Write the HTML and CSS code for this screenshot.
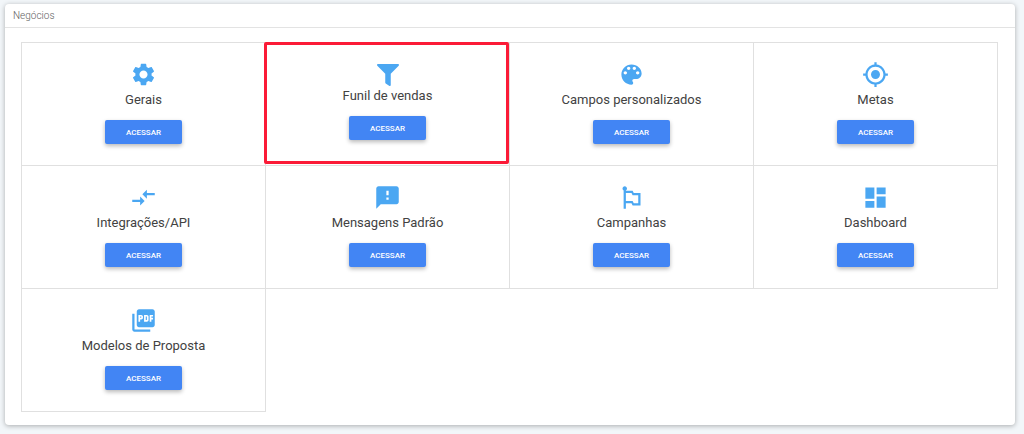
FILE: index.html
```html
<!DOCTYPE html>
<html lang="pt-BR">
<head>
<meta charset="utf-8">
<meta name="viewport" content="width=device-width, initial-scale=1">
<title>Negócios</title>
<link rel="stylesheet" href="styles.css">
</head>
<body>
<main class="card">
  <h1 class="card-header">Negócios</h1>
  <div class="tiles">
    <section class="tile">
      <svg class="icon" viewBox="0 0 24 24" aria-hidden="true"><path d="M19.14 12.94c.04-.3.06-.61.06-.94 0-.32-.02-.64-.07-.94l2.03-1.58c.18-.14.23-.41.12-.61l-1.92-3.32c-.12-.22-.37-.29-.59-.22l-2.39.96c-.5-.38-1.03-.7-1.62-.94l-.36-2.54c-.04-.24-.24-.41-.48-.41h-3.84c-.24 0-.43.17-.47.41l-.36 2.54c-.59.24-1.13.57-1.62.94l-2.39-.96c-.22-.08-.47 0-.59.22L2.74 8.87c-.12.21-.08.47.12.61l2.03 1.58c-.05.3-.09.63-.09.94s.02.64.07.94l-2.03 1.58c-.18.14-.23.41-.12.61l1.92 3.32c.12.22.37.29.59.22l2.39-.96c.5.38 1.03.7 1.62.94l.36 2.54c.05.24.24.41.48.41h3.84c.24 0 .44-.17.47-.41l.36-2.54c.59-.24 1.13-.56 1.62-.94l2.39.96c.22.08.47 0 .59-.22l1.92-3.32c.12-.22.07-.47-.12-.61l-2.01-1.58zM12 15.6c-1.98 0-3.6-1.62-3.6-3.6s1.62-3.6 3.6-3.6 3.6 1.62 3.6 3.6-1.62 3.6-3.6 3.6z"/></svg>
      <h2 class="title">Gerais</h2>
      <button class="btn" type="button">ACESSAR</button>
    </section>
    <section class="tile tile-highlight">
      <svg class="icon icon-funnel" viewBox="0 0 512 512" aria-hidden="true"><path d="M488 0H24C2.700 0-8.050 25.900 7.030 40.970L192 225.940V432c0 7.830 3.820 15.170 10.240 19.660l80 55.980C298.020 518.690 320 507.490 320 487.980V225.940L504.970 40.970C520.020 25.930 509.340 0 488 0z"/></svg>
      <h2 class="title">Funil de vendas</h2>
      <button class="btn" type="button">ACESSAR</button>
    </section>
    <section class="tile">
      <svg class="icon" viewBox="0 0 24 24" aria-hidden="true"><path d="M12 3c-4.970 0-9 4.030-9 9s4.030 9 9 9c.83 0 1.500-.67 1.500-1.500 0-.39-.15-.74-.39-1.010-.23-.26-.38-.61-.38-.99 0-.83.67-1.500 1.500-1.500H16c2.760 0 5-2.240 5-5 0-4.420-4.030-8-9-8zm-5.500 9c-.83 0-1.500-.67-1.500-1.500S5.670 9 6.500 9 8 9.670 8 10.500 7.330 12 6.500 12zm3-4C8.670 8 8 7.330 8 6.500S8.670 5 9.500 5s1.500.67 1.500 1.500S10.330 8 9.500 8zm5 0c-.83 0-1.500-.67-1.500-1.500S13.670 5 14.500 5s1.500.67 1.500 1.500S15.330 8 14.500 8zm3 4c-.83 0-1.500-.67-1.500-1.500S16.670 9 17.500 9s1.500.67 1.500 1.500-.67 1.500-1.500 1.500z"/></svg>
      <h2 class="title">Campos personalizados</h2>
      <button class="btn" type="button">ACESSAR</button>
    </section>
    <section class="tile">
      <svg class="icon" viewBox="0 0 24 24" aria-hidden="true"><path d="M12 8c-2.210 0-4 1.790-4 4s1.790 4 4 4 4-1.790 4-4-1.790-4-4-4zm8.940 3c-.46-4.170-3.770-7.480-7.940-7.940V1h-2v2.060C6.830 3.520 3.520 6.830 3.060 11H1v2h2.060c.46 4.170 3.770 7.480 7.940 7.940V23h2v-2.060c4.170-.46 7.480-3.770 7.940-7.940H23v-2h-2.060zM12 19c-3.870 0-7-3.130-7-7s3.130-7 7-7 7 3.130 7 7-3.130 7-7 7z"/></svg>
      <h2 class="title">Metas</h2>
      <button class="btn" type="button">ACESSAR</button>
    </section>
    <section class="tile">
      <svg class="icon" viewBox="0 0 24 24" aria-hidden="true"><path d="M9.010 14H2v2h7.010v3L13 15l-3.990-4v3zm5.980-1v-3H22V8h-7.010V5L11 9l3.990 4z"/></svg>
      <h2 class="title">Integrações/API</h2>
      <button class="btn" type="button">ACESSAR</button>
    </section>
    <section class="tile">
      <svg class="icon" viewBox="0 0 24 24" aria-hidden="true"><path d="M20 2H4c-1.100 0-1.990.9-1.990 2L2 22l4-4h14c1.100 0 2-.9 2-2V4c0-1.100-.9-2-2-2zm-7 12h-2v-2h2v2zm0-4h-2V6h2v4z"/></svg>
      <h2 class="title">Mensagens Padrão</h2>
      <button class="btn" type="button">ACESSAR</button>
    </section>
    <section class="tile">
      <svg class="icon" viewBox="0 0 24 24" aria-hidden="true"><path d="M14 8l-1-2H7V5.720c.6-.34 1-.98 1-1.720 0-1.100-.9-2-2-2s-2 .9-2 2c0 .74.4 1.380 1 1.720V22h2v-5h5l1 2h7V8h-6zm4 9h-4l-1-2H7V8h5l1 2h5v7z"/></svg>
      <h2 class="title">Campanhas</h2>
      <button class="btn" type="button">ACESSAR</button>
    </section>
    <section class="tile">
      <svg class="icon" viewBox="0 0 24 24" aria-hidden="true"><path d="M3 13h8V3H3v10zm0 8h8v-6H3v6zm10 0h8V11h-8v10zm0-18v6h8V3h-8z"/></svg>
      <h2 class="title">Dashboard</h2>
      <button class="btn" type="button">ACESSAR</button>
    </section>
    <section class="tile">
      <svg class="icon" viewBox="0 0 24 24" aria-hidden="true"><path d="M20 2H8c-1.100 0-2 .9-2 2v12c0 1.100.9 2 2 2h12c1.100 0 2-.9 2-2V4c0-1.100-.9-2-2-2zm-8.500 7.500c0 .83-.67 1.500-1.500 1.500H9v2H7.500V7H10c.83 0 1.500.67 1.500 1.500v1zm5 2c0 .83-.67 1.500-1.500 1.500h-2.500V7H15c.83 0 1.500.67 1.500 1.500v3zm4-3H19v1h1.500V11H19v2h-1.500V7h3v1.500zM9 9.500h1v-1H9v1zM4 6H2v14c0 1.100.9 2 2 2h14v-2H4V6zm10 5.500h1v-3h-1v3z"/></svg>
      <h2 class="title">Modelos de Proposta</h2>
      <button class="btn" type="button">ACESSAR</button>
    </section>
  </div>
</main>
</body>
</html>
```
FILE: styles.css
```css
body {
  margin: 0;
  padding: 4px 9px 9px 5px;
  background: #f2f6f9;
  font-family: Roboto, "Liberation Sans", sans-serif;
  color: #424242;
}

.card {
  background: #fff;
  border-radius: 4px;
  box-shadow: 0 1px 5px rgba(0, 0, 0, 0.3);
}

.card-header {
  margin: 0;
  padding: 0 8px;
  border-bottom: 1px solid #e3e3e3;
  font-size: 10px;
  font-weight: 300;
  line-height: 23px;
  color: #616161;
}

.tiles {
  display: grid;
  grid-template-columns: repeat(4, 1fr);
  padding: 14px 18px 14px 16px;
}

.tile {
  position: relative;
  display: flex;
  flex-direction: column;
  align-items: center;
  margin: 0 -1px -1px 0;
  padding: 18px 8px 21px;
  border: 1px solid #e0e0e0;
}

.tile-highlight::after {
  content: "";
  position: absolute;
  inset: -1px 0 1px -2px;
  border: 3px solid #fb1b37;
  border-radius: 2px;
  pointer-events: none;
}

.icon {
  width: 27px;
  height: 27px;
  fill: #4ba7f2;
}

.icon-funnel {
  width: 22px;
  height: 22px;
  margin-top: 3px;
}

.title {
  margin: 2px 0 10px;
  font-size: 13px;
  font-weight: 400;
  line-height: 20px;
}

.icon-funnel + .title {
  margin-top: 0;
}

.btn {
  min-width: 77px;
  height: 24px;
  padding: 0 20px;
  border: 0;
  border-radius: 2px;
  background: #4285f4;
  box-shadow: 0 2px 4px rgba(0, 0, 0, 0.28);
  font-family: inherit;
  font-size: 8px;
  font-weight: 500;
  color: #fff;
  cursor: pointer;
}
```
